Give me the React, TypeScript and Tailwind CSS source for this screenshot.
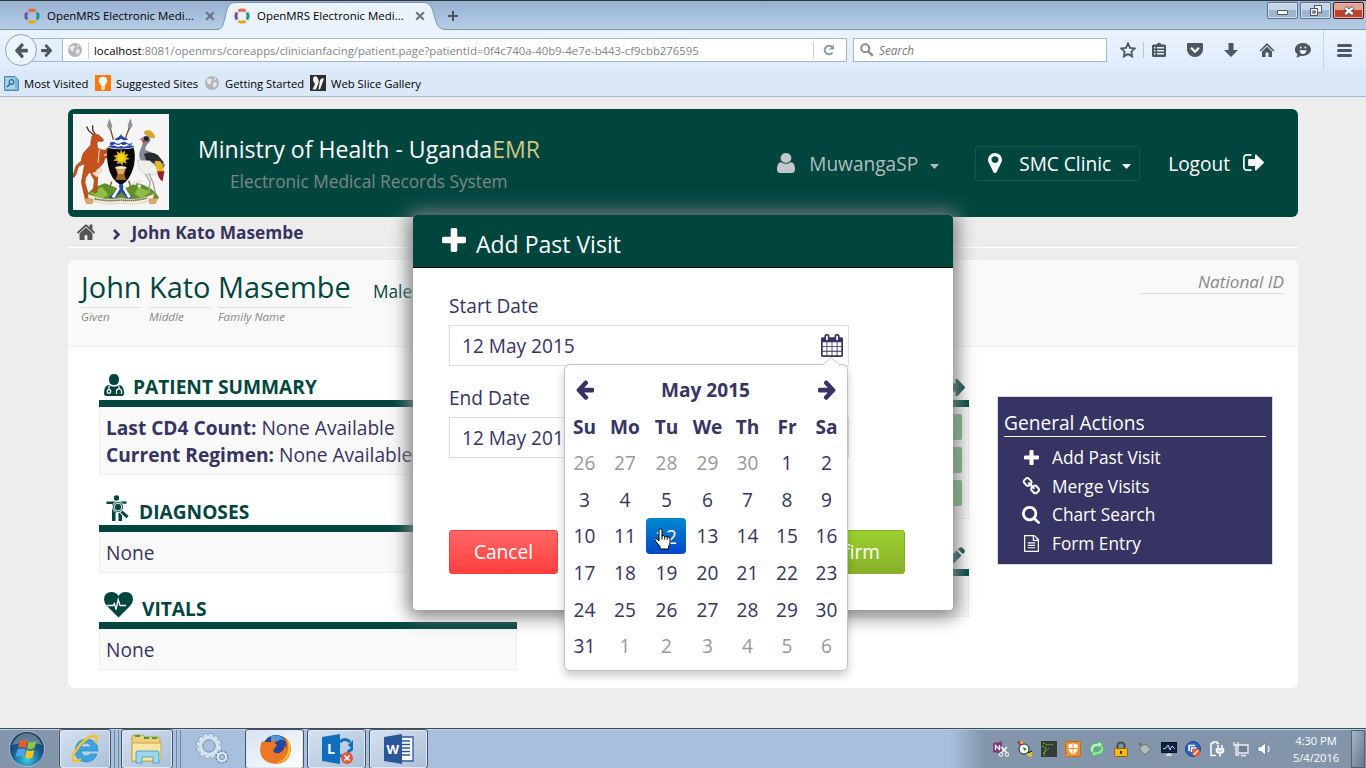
import type { ReactNode } from "react";

const D = {
  plus: "M1600 736v192q0 40-28 68t-68 28h-416v416q0 40-28 68t-68 28h-192q-40 0-68-28t-28-68v-416h-416q-40 0-68-28t-28-68v-192q0-40 28-68t68-28h416v-416q0-40 28-68t68-28h192q40 0 68 28t28 68v416h416q40 0 68 28t28 68z",
  user: "M1280 1399q0 109-62.5 187t-150.5 78h-854q-88 0-150.5-78t-62.5-187q0-85 8.5-160.5t31.5-152 58.5-131 94-89 134.5-34.5q131 128 313 128t313-128q76 0 134.5 34.5t94 89 58.5 131 31.5 152 8.5 160.5zm-256-887q0 159-112.5 271.5t-271.5 112.5-271.5-112.5-112.5-271.5 112.5-271.5 271.5-112.5 271.5 112.5 112.5 271.5z",
  marker: "M1152 640q0-106-75-181t-181-75-181 75-75 181 75 181 181 75 181-75 75-181zm256 0q0 109-33 179l-364 774q-16 33-47.5 52t-67.5 19-67.5-19-46.5-52l-365-774q-33-70-33-179 0-212 150-362t362-150 362 150 150 362z",
  signout: "M704 1440q0 4 1 20t.5 26.5-3 23.5-10 19.5-20.5 6.5h-320q-119 0-203.5-84.5t-84.5-203.5v-704q0-119 84.5-203.5t203.5-84.5h320q13 0 22.5 9.5t9.5 22.5q0 4 1 20t.5 26.5-3 23.5-10 19.5-20.5 6.5h-320q-66 0-113 47t-47 113v704q0 66 47 113t113 47h312l11.5 1 11.5 3 8 5.5 7 9 2 13.5zm928-544q0 26-19 45l-544 544q-19 19-45 19t-45-19-19-45v-288h-448q-26 0-45-19t-19-45v-384q0-26 19-45t45-19h448v-288q0-26 19-45t45-19 45 19l544 544q19 19 19 45z",
  home: "M1472 992v480q0 26-19 45t-45 19h-384v-384h-256v384h-384q-26 0-45-19t-19-45v-480q0-1 .5-3t.5-3l575-474 575 474q1 2 1 6zm223-69l-62 74q-8 9-21 11h-3q-13 0-21-7l-692-577-692 577q-12 8-24 7-13-2-21-11l-62-74q-8-10-7-23.5t11-21.5l719-599q32-26 76-26t76 26l244 204v-195q0-14 9-23t23-9h192q14 0 23 9t9 23v408l219 182q10 8 11 21.5t-7 23.5z",
  left: "M1664 896v128q0 53-32.5 90.5t-84.5 37.5h-704l293 294q38 36 38 90t-38 90l-75 76q-37 37-90 37-52 0-91-37l-651-652q-37-37-37-90 0-52 37-91l651-650q38-38 91-38 52 0 90 38l75 74q38 38 38 91t-38 91l-293 293h704q52 0 84.5 37.5t32.5 90.5z",
  calendar: "M192 1664h288v-288h-288v288zm352 0h320v-288h-320v288zm-352-352h288v-320h-288v320zm352 0h320v-320h-320v320zm-352-384h288v-288h-288v288zm736 736h320v-288h-320v288zm-384-736h320v-288h-320v288zm768 736h288v-288h-288v288zm-384-352h320v-320h-320v320zm-352-864v-288q0-13-9.5-22.5t-22.5-9.5h-64q-13 0-22.5 9.5t-9.5 22.5v288q0 13 9.5 22.5t22.5 9.5h64q13 0 22.5-9.5t9.5-22.5zm736 864h288v-320h-288v320zm-384-384h320v-288h-320v288zm384 0h288v-288h-288v288zm32-480v-288q0-13-9.5-22.5t-22.5-9.5h-64q-13 0-22.5 9.5t-9.5 22.5v288q0 13 9.5 22.5t22.5 9.5h64q13 0 22.5-9.5t9.5-22.5zm384-64v1280q0 52-38 90t-90 38h-1408q-52 0-90-38t-38-90v-1280q0-52 38-90t90-38h128v-96q0-66 47-113t113-47h64q66 0 113 47t47 113v96h384v-96q0-66 47-113t113-47h64q66 0 113 47t47 113v96h128q52 0 90 38t38 90z",
  search: "M1216 832q0-185-131.5-316.5t-316.5-131.5-316.5 131.5-131.5 316.5 131.5 316.5 316.5 131.5 316.5-131.5 131.5-316.5zm512 832q0 52-38 90t-90 38q-54 0-90-38l-343-342q-179 124-399 124-143 0-273.5-55.5t-225-150-150-225-55.5-273.5 55.5-273.5 150-225 225-150 273.5-55.5 273.5 55.5 225 150 150 225 55.5 273.5q0 220-124 399l343 343q37 37 37 90z",
  link: "M1520 1216q0-40-28-68l-208-208q-28-28-68-28-42 0-72 32 3 3 19 18.5t21.5 21.5 15 19 13 25.5 3.5 27.5q0 40-28 68t-68 28q-15 0-27.5-3.5t-25.5-13-19-15-21.5-21.5-18.5-19q-33 31-33 73 0 40 28 68l206 207q27 27 68 27 40 0 68-26l147-146q28-28 28-67zm-703-705q0-40-28-68l-206-207q-28-28-68-28-39 0-68 27l-147 146q-28 28-28 67 0 40 28 68l208 208q27 27 68 27 42 0 72-31-3-3-19-18.5t-21.5-21.5-15-19-13-25.5-3.5-27.5q0-40 28-68t68-28q15 0 27.5 3.5t25.5 13 19 15 21.5 21.5 18.500 19q33-31 33-73zm895 705q0 120-85 203l-147 146q-83 83-203 83-121 0-204-85l-206-207q-83-83-83-203 0-123 88-209l-88-88q-86 88-208 88-120 0-204-84l-208-208q-84-84-84-204t85-203l147-146q83-83 203-83 121 0 204 85l206 207q83 83 83 203 0 123-88 209l88 88q86-88 208-88 120 0 204 84l208 208q84 84 84 204z",
  file: "M1596 380q28 28 48 76t20 88v1152q0 40-28 68t-68 28h-1344q-40 0-68-28t-28-68v-1600q0-40 28-68t68-28h896q40 0 88 20t76 48zm-444-244v376h376q-10-29-22-41l-313-313q-12-12-41-22zm384 1528v-1024h-416q-40 0-68-28t-28-68v-416h-768v1536h1280zm-1024-864q0-14 9-23t23-9h704q14 0 23 9t9 23v64q0 14-9 23t-23 9h-704q-14 0-23-9t-9-23v-64zm736 224q14 0 23 9t9 23v64q0 14-9 23t-23 9h-704q-14 0-23-9t-9-23v-64q0-14 9-23t23-9h704zm0 256q14 0 23 9t9 23v64q0 14-9 23t-23 9h-704q-14 0-23-9t-9-23v-64q0-14 9-23t23-9h704z",
};

function Glyph({ d, box, className }: { d: string; box: string; className: string }) {
  return (
    <svg viewBox={box} preserveAspectRatio="none" fill="currentColor" className={"shrink-0 " + className}>
      <path d={d} />
    </svg>
  );
}

function MrsRing() {
  return (
    <svg viewBox="0 0 16 16" fill="none" strokeWidth="3" className="h-4 w-4 shrink-0">
      <path d="M4.500 3.200Q8 .8 11.500 3.200" stroke="#ee6a35" />
      <path d="M12.900 4.500Q15.300 8 12.900 11.500" stroke="#159a8c" />
      <path d="M11.500 12.900Q8 15.300 4.500 12.900" stroke="#eea616" />
      <path d="M3.100 11.500Q.7 8 3.100 4.500" stroke="#6657a5" />
    </svg>
  );
}

function CloseX() {
  return (
    <svg viewBox="0 0 10 10" className="h-[10px] w-[10px] shrink-0" stroke="#6c7683" strokeWidth="2.200">
      <path d="M1.200 1.200l7.600 7.600M8.800 1.200L1.200 8.800" />
    </svg>
  );
}

function Globe() {
  return (
    <svg viewBox="0 0 14 14" className="h-[14px] w-[14px] shrink-0">
      <circle cx="7" cy="7" r="7" fill="#b3b5b8" />
      <path d="M2 3.500L5 2.500 7.500 4 5.500 6 6 8 4 8.500 2 6.500zM8 6.500l3-.5 1 2.500-2.500 3.500-1.500-2zM9 1.500l2 1.200-.5 1.500-1.500-.7z" fill="#e8eaec" />
    </svg>
  );
}

function TitleBar() {
  return (
    <div className="relative flex h-[30px] shrink-0 items-start border-t border-[#33363b] bg-linear-to-b from-[#96b1d0] to-[#b8cfe8] shadow-[inset_0_-1px_0_#7b95b2]">
      <svg viewBox="0 0 230 29" className="absolute left-[217px] top-0 h-[29px] w-[230px]">
        <path d="M0 28.500C6 28 6 24 8 17C10 7 11 1.500 19 1.500H206C214 1.500 215 7 218 17C220 24 221 28 229 28.500V30H0z" fill="#eaf2fb" stroke="#7b95b2" />
      </svg>
      <div className="relative flex h-[29px] items-center pl-6">
        <MrsRing />
        <span className="ml-[7px] w-[158px] text-[11.450px]">OpenMRS Electronic Medi...</span>
        <CloseX />
        <span className="w-[19px]" />
        <MrsRing />
        <span className="ml-[7px] w-[158px] text-[11.450px]">OpenMRS Electronic Medi...</span>
        <CloseX />
        <svg viewBox="0 0 10 10" className="ml-[23px] h-[10px] w-[10px]" stroke="#4b535e" strokeWidth="2"><path d="M5 0v10M0 5h10" /></svg>
      </div>
      <div className="ml-auto flex gap-[2px] pr-[2px] pt-px">
        <div className="flex h-[17px] w-[31px] items-center justify-center rounded-[2px] border border-[#61718a] bg-linear-to-b from-[#c5d5e8] from-50% to-[#9cb5d0] to-50% shadow-[inset_0_0_0_1px_#d3e0ee]">
          <div className="mt-1 h-[5px] w-[11px] rounded-[1px] border border-[#535666] bg-white" />
        </div>
        <div className="flex h-[17px] w-[31px] items-center justify-center rounded-[2px] border border-[#61718a] bg-linear-to-b from-[#c5d5e8] from-50% to-[#9cb5d0] to-50% shadow-[inset_0_0_0_1px_#d3e0ee]">
          <svg viewBox="0 0 12 12" className="h-3 w-3" fill="#f2f4f7" stroke="#535666"><rect x="4.500" y=".5" width="7" height="7" /><rect x=".5" y="3.500" width="7" height="7" /><rect x="2.900" y="5.900" width="2.200" height="2.200" fill="#9cb5d0" /></svg>
        </div>
        <div className="flex h-[17px] w-[31px] items-center justify-center rounded-[2px] border border-[#4d1822] bg-linear-to-b from-[#e3a394] from-50% to-[#bd4129] to-50% shadow-[inset_0_0_0_1px_#e9b3a5]">
          <svg viewBox="0 0 12 10" className="h-[10px] w-3"><path d="M2 1.500l8 7M10 1.500l-8 7" stroke="#535666" strokeWidth="4" /><path d="M2.300 1.800l7.400 6.400M9.700 1.800L2.300 8.200" stroke="#fff" strokeWidth="2.200" /></svg>
        </div>
      </div>
    </div>
  );
}

function NavBar() {
  return (
    <div className="flex h-10 shrink-0 items-center bg-linear-to-b from-[#eaf3fc] to-[#deebf9] text-[#4c5764]">
      <div className="relative z-10 ml-[5px] flex h-8 w-8 shrink-0 items-center justify-center rounded-full border border-[#8fa4bd] bg-[#eef4fb]">
        <Glyph d={D.left} box="64 160 1600 1580" className="h-[15px] w-[14px]" />
      </div>
      <div className="-ml-[5px] flex h-[24px] w-[30px] shrink-0 items-center justify-center border-y border-[#a3b7cd] pl-2 pr-2">
        <Glyph d={D.left} box="64 160 1600 1580" className="h-[13px] w-[12px] -scale-x-100" />
      </div>
      <div className="flex h-[24px] w-[785px] shrink-0 items-center border border-[#a3b7cd] bg-white pl-[5px]">
        <Globe />
        <span className="ml-[6px] h-[17px] w-px bg-[#cfd3d8]" />
        <span className="ml-[5px] w-[719px] whitespace-nowrap pt-px text-[11.370px] text-[#80858b]"><span className="text-black">localhost</span>:8081/openmrs/coreapps/clinicianfacing/patient.page?patientId=0f4c740a-40b9-4e7e-b443-cf9cbb276595</span>
        <span className="h-[17px] w-px bg-[#cfd3d8]" />
        <svg viewBox="0 0 12 12" className="ml-[9px] h-3 w-3" fill="none" stroke="#8a99ab" strokeWidth="2"><path d="M9.500 8.500A4.300 4.300 0 1 1 9.300 3.300" /><path d="M11 .5V5.500H6z" fill="#8a99ab" stroke="none" /></svg>
      </div>
      <div className="ml-[6px] flex h-[24px] w-[254px] shrink-0 items-center border border-[#a3b7cd] bg-white pl-[6px]">
        <svg viewBox="0 0 14 14" className="h-[14px] w-[14px]" fill="none" stroke="#8d8f92"><circle cx="5.200" cy="5.200" r="4" strokeWidth="2" /><path d="M8.300 8.300l4.500 4.500" strokeWidth="2.600" /></svg>
        <span className="ml-[5px] pt-px text-[11.700px] italic text-[#77797c]">Search</span>
      </div>
      <svg viewBox="0 0 16 16" className="ml-[13px] h-4 w-4 shrink-0" fill="none" stroke="currentColor" strokeWidth="1.800"><path d="M8 1.500l2 4.300 4.700.6-3.400 3.300.8 4.700L8 12.100l-4.100 2.300.8-4.700L1.300 6.400l4.700-.6z" /></svg>
      <span className="ml-[7px] h-4 w-px shrink-0 bg-[#b9c8d9]" />
      <svg viewBox="0 0 16 16" className="ml-[7px] h-4 w-4 shrink-0" fill="currentColor"><path fillRule="evenodd" d="M1 4q0-1.500 1.500-1.500H5L8 .5l3 2h2.500Q15 2.500 15 4v9.500q0 1.500-1.500 1.500h-11Q1 15 1 13.500zM3 5v1.500h1.500V5zm3 0v1.500h7V5zM3 8v1.500h1.500V8zm3 0v1.500h7V8zm-3 3v1.500h1.500V11zm3 0v1.500h7V11z" /></svg>
      <svg viewBox="0 0 16 16" className="ml-5 h-4 w-4 shrink-0"><path d="M1 1h14q1 0 1 1v5.500a8 7.500 0 0 1-16 0V2q0-1 1-1z" fill="currentColor" /><path d="M4 5.800l4 3.900 4-3.900" fill="none" stroke="#fff" strokeWidth="2.200" /></svg>
      <svg viewBox="0 0 16 16" className="ml-5 h-4 w-4 shrink-0" fill="currentColor"><path d="M5.500 1h5v7H15L8 15 1 8h4.500z" /></svg>
      <svg viewBox="0 0 16 16" className="ml-5 h-4 w-4 shrink-0" fill="currentColor"><path d="M8 1L.5 8.500l1.100 1.100L8 3.300l6.400 6.300 1.100-1.100z" /><path d="M8 4.600L3 9.500V15h3.500v-4.500h3V15H13V9.500z" /></svg>
      <svg viewBox="0 0 16 16" className="ml-5 h-4 w-4 shrink-0"><path d="M8 1a8 6.500 0 1 1-2 12.800Q4 15.500 1 15.500q1.500-1.500 1.400-3.300A8 6.500 0 0 1 8 1z" fill="currentColor" /><path d="M4.500 8.300h7Q11 12 8 12t-3.500-3.700z" fill="#fff" /><circle cx="5.700" cy="5.500" r="1" fill="#fff" /><circle cx="10.300" cy="5.500" r="1" fill="#fff" /></svg>
      <span className="ml-3 h-10 w-px shrink-0 bg-[#c6d5e6]" />
      <div className="ml-[13px] flex w-[15px] shrink-0 flex-col gap-[2px]">
        <span className="h-[3px] rounded bg-current" /><span className="h-[3px] rounded bg-current" /><span className="h-[3px] rounded bg-current" />
      </div>
    </div>
  );
}

function Bookmarks() {
  return (
    <div className="flex h-[27px] shrink-0 items-center border-b border-[#a3b8d0] bg-[#dae8f8] pl-1 text-[11.300px] leading-[26px]">
      <svg viewBox="0 0 15 15" className="h-[15px] w-[15px]"><path d="M.5.500H11L14.500 4V14.500H.5z" fill="#7db7d8" stroke="#4b8cb5" /><rect x="1.500" y="2" width="9.500" height="11" fill="#a9d3ea" /><circle cx="7.500" cy="6" r="2.300" fill="none" stroke="#2f6b94" strokeWidth="1.300" /><path d="M5.800 8L3 11" stroke="#2f6b94" strokeWidth="1.500" /></svg>
      <span className="ml-[5px] w-[71px] pt-[2px]">Most Visited</span>
      <svg viewBox="0 0 16 16" className="h-4 w-4"><rect width="16" height="16" fill="#fb7b0a" /><path d="M8 1.800a4 4 0 0 1 2.300 7.400Q10 10 10 11.500H6Q6 10 5.700 9.200A4 4 0 0 1 8 1.800zM6.200 12.300h3.600v1.500l-1 1H7.200l-1-1z" fill="#fff" /></svg>
      <span className="ml-[5px] w-[89px] pt-[2px]">Suggested Sites</span>
      <Globe />
      <span className="ml-[6px] w-[85px] pt-[2px] text-[11.200px]">Getting Started</span>
      <svg viewBox="0 0 16 16" className="h-4 w-4"><rect width="16" height="16" fill="#2b2c2e" /><path d="M4 1.500q2.500-1 4 2Q9.500 7 8 9.500L6 14.500H2.500L5 9Q1.500 5 4 1.500zM9.500 8q0-4 2.500-4.500Q14 2 13.500 5L10 14.500H8.500z" fill="#f3f3f3" /></svg>
      <span className="ml-[5px] pt-[2px]">Web Slice Gallery</span>
    </div>
  );
}

function CoatOfArms() {
  return (
    <svg viewBox="9 12 288 288" className="h-24 w-24 bg-[#f5f5f5]">
      <path d="M118 45l22 80M181 45l-30 80M125 215l-12 38M176 212l14 40" stroke="#8b4a25" strokeWidth="4" />
      <path d="M118 28l8 20-5 14-9-14zM181 28l6 18-9 14-4-14z" fill="#8e969b" stroke="#50575b" />
      <path d="M44 264q14-30 61-44l50 20 45-22q50 12 68 46l-46 12H80z" fill="#5f9128" />
      <path d="M62 250l33-20 20 24-25 16zM205 230l36 16-26 18-22-12z" fill="#8fbe46" />
      <path d="M72 76l-16-14-6-12M76 74l-8-14 0-14" stroke="#4a3022" strokeWidth="4" fill="none" />
      <path d="M66 78l7-5 12 1 14 12 1 7-6 2-10-2-3 8 2 14q14 6 22 6l13-12 6-2 2 5-12 16-14 6q8 16-2 28-10 12-20 18l5 24-2 42-9 4-3-9 4-30-14-26-12 18-2 14 12 44-7 6-6-6-10-44 6-34 4-22-18 8-8 24-6 10-4-4 10-32 16-14q2-24 14-32l14-16 2-18z" fill="#c5511b" stroke="#8a3410" strokeWidth="1.500" />
      <path d="M68 190q16-2 26-18l2 10-16 18zM88 118l-4 40" stroke="#f0dcc5" fill="#f0dcc5" strokeWidth="3" />
      <path d="M96 142l16-8 14 14-3 6-13-10-14 6z" fill="#c5511b" stroke="#8a3410" />
      <path d="M228 76q-8-10-6-10 14-10 24 0 10 10 8 18-12 2-26-8z" fill="#dba62e" stroke="#b58512" />
      <path d="M216 83q8-8 18-4 10 6 6 16-14 10-14 24 16 6 26 14l34 32-12 20-34-10-24-18q-14-18-5-38l10-26-13-4z" fill="#808994" />
      <path d="M222 80q11-4 16 6l-6 9-10-4z" fill="#202328" /><path d="M216 90h9v8h-8z" fill="#cf3a34" />
      <path d="M222 132q26-10 42 4l18 22q-30 6-54-8z" fill="#272a2e" />
      <path d="M201 150l39 2 26 26-8 16q-32 4-47-12z" fill="#f0eee9" stroke="#9b9b9b" />
      <path d="M254 152l18 2 12 34q-16 6-24-8z" fill="#e5b525" /><path d="M262 184l21 0-5 30q-15-8-16-30z" fill="#8e2424" />
      <path d="M226 192l14 22-4 34M236 190l14 30 6 30" stroke="#a8a49c" strokeWidth="4" fill="none" />
      <path d="M114 110q39-18 76 0 8 24 2 56-10 44-39 60-31-16-39-60-6-32 0-56z" fill="#090909" />
      <path d="M114 114l4-20q18-4 35-22 17 18 34 22l4 20q-38 8-77 0z" fill="#fff" />
      <path d="M133 88q20-10 20-16 2 8 22 16-10 6-22-2-10 8-20 2zM120 98q8-6 16 0t17 0 17 0 17 0v5q-9 4-17-1-8 6-17 0-9 6-17 0-8 4-16 2zM116 108q10-4 20 0 8 4 17 0 9 4 17 0 9-4 21 0v4q-38 8-75 0z" fill="#2846a8" />
      <path d="M153 118l4 10 9-6-2 11 12 0-7 8 10 6-12 3 3 11-10-4-4 11-5-10-10 5 2-10-13-1 9-8-9-7 12-2-2-11 10 6z" fill="#d9b30e" /><circle cx="153" cy="143" r="11" fill="#ffd616" />
      <path d="M136 172h33l-6 20 5 18h-31l5-18z" fill="#a36627" /><path d="M140 178h25l-5 14H145z" fill="#dfae69" /><ellipse cx="152.500" cy="173" rx="17" ry="5" fill="#efe4cd" />
      <path d="M149 222h9l5 16 24 24-12 6-21-22-22 22-15-6 26-24z" fill="#2846a8" /><path d="M147 228l-22 32 8 5 16-28zM161 228l22 32-8 5-16-28z" fill="#fff" />
      <path d="M54 252q48 22 98 12 52 10 100-13l-2 16q-45 22-98 12-50 10-97-12z" fill="#f6f0dc" stroke="#b39c6d" />
      <path d="M74 266q34 9 78 4 40 5 80-6" stroke="#5d5546" strokeWidth="5" strokeDasharray="4 2" fill="none" />
      <path d="M42 264l27 3-2 14H50zM264 264l-27 3 2 14h17z" fill="#dba866" stroke="#9b6d37" />
      <g fill="#fafafa" stroke="#aaa"><circle cx="195" cy="220" r="5" /><circle cx="207" cy="216" r="5" /><circle cx="208" cy="228" r="5" /></g>
    </svg>
  );
}

function Caret({ className }: { className: string }) {
  return <svg viewBox="0 0 9 5" className={"h-[5px] w-[9px] " + className} fill="currentColor"><path d="M0 0h9L4.500 5z" /></svg>;
}

function Header() {
  return (
    <div className="flex h-[108px] shrink-0 rounded-md bg-[#00463f] pl-[5px] text-[19.100px] text-white">
      <div className="pt-[5px]"><CoatOfArms /></div>
      <div className="ml-[29px] flex-1 pt-[25px]">
        <div className="h-[33px] text-[23.080px] leading-[30px]">Ministry of Health - Uganda<span className="text-[#cfc77f]">EMR</span></div>
        <div className="pl-8 text-[17.280px] leading-[30px] text-[#7c8784]">Electronic Medical Records System</div>
      </div>
      <div className="flex h-[108px] items-center">
        <Glyph d={D.user} box="0 128 1280 1536" className="h-5 w-[18px] text-[#c3c8c7]" />
        <span className="ml-[14px] pt-[2px] text-[#aebfbc]">MuwangaSP</span>
        <Caret className="ml-[12px] mt-[6px] text-[#aebfbc]" />
        <div className="ml-9 flex h-[35px] w-[165px] items-center rounded-[3px] border border-[#055f53] pl-3">
          <Glyph d={D.marker} box="384 128 1024 1536" className="h-5 w-[14px]" />
          <span className="ml-[17px] pt-[2px]">SMC Clinic</span>
          <Caret className="ml-[11px] mt-[6px]" />
        </div>
        <span className="ml-[28px] pt-[2px]">Logout</span>
        <Glyph d={D.signout} box="64 256 1568 1280" className="-mt-[2px] ml-[13px] mr-[34px] h-[17px] w-[21px]" />
      </div>
    </div>
  );
}

function PatientName({ name, label, className }: { name: string; label: string; className: string }) {
  return (
    <div className={className}>
      <div className="h-[35px] whitespace-nowrap border-b border-[#dcdcdc] text-[28.900px] leading-[28px] text-[#00463f]">{name}</div>
      <div className="text-[11.600px] italic leading-[18px] text-[#888]">{label}</div>
    </div>
  );
}

function Section({ icon, title, className, children }: { icon: ReactNode; title: string; className: string; children: ReactNode }) {
  return (
    <div className={className}>
      <div className="flex h-[26px] items-center font-bold text-[#00463f]">{icon}<span className="pt-px">{title}</span></div>
      <div className="h-[7px] bg-[#00463f]" />
      <div className="border border-t-0 border-[#eee] bg-[#f9f9f9] px-[6px] pb-[5px] pt-[8px] leading-[27px]">{children}</div>
    </div>
  );
}

function Doctor() {
  return (
    <svg viewBox="0 0 20 22" className="-mt-1 ml-[5px] mr-[9px] h-[22px] w-5"><path d="M10 0q5 0 5 5.500T10 11 5 5.500 10 0zM4 11q6 3.500 12 0 4 1.500 4 8 0 3-2 3H2q-2 0-2-3 0-6.500 4-8z" fill="#00463f" /><path d="M5 12v4M15 12v3" stroke="#fff" strokeWidth="1.200" /><circle cx="5" cy="17.500" r="1.800" fill="none" stroke="#fff" strokeWidth="1.300" /><path d="M12.500 20v-3q0-2.200 2.500-2.200t2.500 2.200v3" fill="none" stroke="#fff" strokeWidth="1.300" /></svg>
  );
}

function Diagnosis() {
  return (
    <svg viewBox="0 0 23 26" className="-mt-2 ml-[7px] mr-[10px] h-[26px] w-[23px]" fill="#00463f"><circle cx="10.500" cy="3" r="2.700" /><path d="M1 6.500h19.500v2.200H16V26h-3.500v-8h-3v8H6V9H1Q-.5 8 1 6.500z" /><circle cx="12" cy="12" r="5.500" stroke="#fff" /><circle cx="12" cy="12" r="3.800" stroke="#fff" strokeWidth=".9" /><path d="M15 16l6 6.500" stroke="#fff" strokeWidth="4.500" /><path d="M15.500 16.500l6 5.700" stroke="#00463f" strokeWidth="3" /></svg>
  );
}

function Heart() {
  return (
    <svg viewBox="0 0 29 26" className="-mt-2 ml-[5px] mr-[9px] h-[26px] w-[29px]"><path d="M14.500 25.500L3 14Q0 11 0 7.500 0 0 7.500 0 12 0 14.500 4 17 0 21.500 0 29 0 29 7.500q0 3.500-3 6.500z" fill="#00463f" /><path d="M3 13.500h6l1.500-2 1.500 6 2.200-10 1.800 6H22" fill="none" stroke="#fff" strokeWidth="1.300" /></svg>
  );
}

function Actions() {
  const items = [
    { t: "Add Past Visit", i: <Glyph d={D.plus} box="192 128 1408 1408" className="h-[15px] w-[15px]" /> },
    { t: "Merge Visits", i: <Glyph d={D.link} box="16 16 1696 1696" className="h-[18px] w-[18px]" /> },
    { t: "Chart Search", i: <Glyph d={D.search} box="64 128 1664 1664" className="h-[18px] w-[18px]" /> },
    { t: "Form Entry", i: <Glyph d={D.file} box="128 0 1536 1792" className="h-[17px] w-[15px]" /> },
  ];
  return (
    <div className="ml-[28px] mt-[49px] h-[169px] w-[276px] border border-[#d9d9df] bg-[#363463] px-[6px] pt-[12px] text-white">
      <div className="h-[28px] border-b border-white leading-[28px]">General Actions</div>
      <div className="mt-[7px] text-[17.280px] leading-[28.700px]">
        {items.map((a) => (
          <div key={a.t} className="flex h-[28.700px] items-center pl-[18px]">
            <span className="flex w-[18px] justify-center pb-[2px]">{a.i}</span>
            <span className="ml-3">{a.t}</span>
          </div>
        ))}
      </div>
    </div>
  );
}

function DateField({ label, icon }: { label: string; icon?: boolean }) {
  return (
    <div className="h-[92px]">
      <div className="h-[31px] leading-[25px]">{label}</div>
      <div className="flex h-[41px] w-[400px] items-center justify-between border border-[#ddd] pl-3 pr-[5px]">
        <span className="pt-[2px]">12 May 2015</span>
        {icon && <Glyph d={D.calendar} box="64 0 1664 1792" className="-mt-px h-[23px] w-[22px]" />}
      </div>
    </div>
  );
}

const weeks = ["26 27 28 29 30 1 2", "3 4 5 6 7 8 9", "10 11 12 13 14 15 16", "17 18 19 20 21 22 23", "24 25 26 27 28 29 30", "31 1 2 3 4 5 6"];

function Calendar() {
  return (
    <div className="absolute left-[564px] top-[364px] h-[307px] w-[284px] rounded-md border border-[#c4c4c4] bg-white pt-[6px] text-[19.100px] text-[#363463] shadow-[0_5px_10px_rgba(0,0,0,0.2)]">
      <svg viewBox="0 0 16 9" className="absolute left-[258px] top-[-8px] h-[9px] w-4"><path d="M0 8L8 .5 16 8V9H0z" fill="#fff" /><path d="M0 7.500L8 .5 16 7.500" fill="none" stroke="#ccc" /></svg>
      <div className="flex h-[37px] items-center justify-between pl-[10px] pr-[10px] font-bold">
        <Glyph d={D.left} box="64 160 1600 1580" className="h-5 w-[19px]" />
        <span className="-ml-px pt-[2px]">May 2015</span>
        <Glyph d={D.left} box="64 160 1600 1580" className="h-5 w-[19px] -scale-x-100" />
      </div>
      <div className="grid auto-rows-[36.600px] grid-cols-[39px_42px_41px_41px_39px_40px_39px] items-center text-center">
        {["Su", "Mo", "Tu", "We", "Th", "Fr", "Sa"].map((d) => <span key={d} className="pt-[1.500px] font-bold">{d}</span>)}
        {weeks.flatMap((w, r) => w.split(" ").map((d, c) => {
          const outside = (r === 0 && c < 5) || (r === 5 && c > 0);
          if (r === 2 && c === 2) {
            return <span key={r + "-" + c} className="flex h-9 w-10 items-center justify-center rounded bg-linear-to-b from-[#0088cc] to-[#0044cc] pt-[1.500px] text-white">{d}</span>;
          }
          return <span key={r + "-" + c} className={outside ? "pt-[1.300px] text-[#999]" : "pt-[1.300px]"}>{d}</span>;
        }))}
      </div>
      <svg viewBox="0 0 17 22" className="absolute left-[89px] top-[163px] h-[22px] w-[17px]"><path d="M6.500 1q1.500 0 1.500 1.500V8q1.500-1 2.500.5 1.500-1 2.500.6 2.500-.8 3 1.400v4q0 2-1.500 4V21H6v-2.500L1.500 13Q0 11 1.500 10.500q1.500 0 3.500 2.500V2.500Q5 1 6.500 1z" fill="#fff" stroke="#000" /><path d="M8 7.500v4M10.700 8.500v3M13.200 9.300v2.500" stroke="#000" fill="none" /></svg>
    </div>
  );
}

function Modal() {
  return (
    <div className="absolute left-[413px] top-[215px] flex h-[395px] w-[540px] flex-col rounded bg-white text-[19.100px] text-[#363463] shadow-[0_2px_18px_5px_#808080]">
      <div className="flex h-[53px] shrink-0 items-center rounded-t border-b border-black bg-[#00463f] pl-[29px] text-[23px] text-white">
        <Glyph d={D.plus} box="192 128 1408 1408" className="-mt-[3px] h-6 w-6" />
        <span className="ml-[10px] mt-[6px]">Add Past Visit</span>
      </div>
      <div className="flex flex-col px-9 pt-[26px]">
        <DateField label="Start Date" icon />
        <DateField label="End Date" />
        <div className="mt-[52px] flex w-[456px] justify-between text-white">
          <div className="flex h-11 w-[109px] items-center justify-center rounded-[3px] border border-[#ff3d3d] bg-linear-to-b from-[#ff6666] to-[#ff3d3d]"><span className="pt-px">Cancel</span></div>
          <div className="flex h-11 w-[122px] items-center justify-center rounded-[3px] border border-[#88af28] bg-linear-to-b from-[#9ad22f] to-[#88af28]"><span className="pt-px">Confirm</span></div>
        </div>
      </div>
    </div>
  );
}

function PatientPage() {
  return (
    <div className="flex min-h-0 flex-1 flex-col bg-[#ededed] px-[68px] pt-3 text-[19.150px] text-[#363463]">
      <Header />
      <div className="flex h-[31px] shrink-0 items-center border-b border-white pl-2 text-[17.290px] font-bold">
        <Glyph d={D.home} box="0 220 1792 1316" className="h-4 w-5 text-[#555]" />
        <svg viewBox="0 0 8 11" className="ml-[17px] mt-[5px] h-[11px] w-2" fill="none" stroke="#363463" strokeWidth="2.600"><path d="M1 1l4.500 4.500L1 10" /></svg>
        <span className="ml-[10px] pl-[.5px] pt-[2px]">John Kato Masembe</span>
      </div>
      <div className="mt-3 flex h-[428px] shrink-0 flex-col overflow-hidden rounded-md bg-white">
        <div className="flex h-[87px] border border-b-[#eee] border-x-white border-t-white bg-[#f9f9f9] pl-[12px] pr-[13px] pt-[12px]">
          <PatientName name="John" label="Given" className="w-[60px]" />
          <PatientName name="Kato" label="Middle" className="ml-2 w-[62px]" />
          <PatientName name="Masembe" label="Family Name" className="ml-[7px] w-[133px]" />
          <span className="ml-[22px] mt-[5px] text-[17.280px] leading-[28px] text-[#00463f]">Male</span>
          <div className="ml-auto h-[21px] w-[144px] border-b border-[#dcdcdc] text-right text-[17.200px] italic leading-[18px] text-[#888]">National ID</div>
        </div>
        <div className="flex pl-[31px]">
          <div className="w-[418px] shrink-0">
            <Section className="mt-[27px]" icon={<Doctor />} title="PATIENT SUMMARY">
              <div><b>Last CD4 Count:</b> None Available</div>
              <div><b>Current Regimen:</b> None Available</div>
            </Section>
            <Section className="mt-6" icon={<Diagnosis />} title="DIAGNOSES">None</Section>
            <Section className="mt-[23px]" icon={<Heart />} title="VITALS">None</Section>
          </div>
          <div className="ml-[34px] w-[418px] shrink-0">
            <Section className="mt-[27px]" icon={<Glyph d={D.signout} box="576 340 1060 1110" className="ml-auto mr-1 h-[17px] w-[15px]" />} title="">
              <div className="-mt-px flex flex-col items-end gap-[7px] pb-[7px]">
                {[0, 1, 2].map((i) => (
                  <div key={i} className="h-[26px] w-[90px] rounded-[2px] bg-[#79b879] pr-[7px] text-right text-[12.500px] leading-[27px] text-[#e5e5e5]">E</div>
                ))}
              </div>
            </Section>
            <Section className="mt-6" icon={<svg viewBox="0 0 18 18" className="ml-auto mr-1 h-[18px] w-[18px]" fill="#00463f"><path d="M0 18l1-6L9.500 3.500l5 5L6 17zM11 2.300l1.500-1.500q1.500-1 2.800 0l2 2q1 1.500 0 2.800L15.800 7z" /></svg>} title="">&nbsp;</Section>
          </div>
          <Actions />
        </div>
      </div>
    </div>
  );
}

function TaskButton({ className, children }: { className: string; children: ReactNode }) {
  return <div className={"flex h-10 items-center justify-center rounded-[3px] border border-[#44546a] bg-linear-to-br from-[#d6e2f0] to-[#a9bfd9] shadow-[inset_0_0_0_1px_#dde8f4] " + className}>{children}</div>;
}

function Tray() {
  return (
    <div className="flex items-center gap-2">
      <svg viewBox="0 0 16 16" className="h-4 w-4"><path d="M0 2l9-1.500v12L0 11z" fill="#80397b" /><path d="M2.500 9V4.500l4 4V4" stroke="#fff" strokeWidth="1.300" fill="none" /><path d="M8 6l6 6M14 6l-6 6" stroke="#fff" strokeWidth="1.500" /><circle cx="8" cy="13.500" r="1.800" fill="none" stroke="#fff" /><circle cx="14" cy="13.500" r="1.800" fill="none" stroke="#fff" /></svg>
      <svg viewBox="0 0 16 16" className="h-4 w-4"><path d="M1 0l2 4" stroke="#d2214e" strokeWidth="2" /><path d="M4 3l2-2" stroke="#f3cf00" strokeWidth="2" /><circle cx="7" cy="8" r="5" fill="#fff" stroke="#222" /><path d="M6 6l4 2-3 2z" fill="#268c2c" /><path d="M10 14l5-3M12 15l3-1" stroke="#f3cf00" strokeWidth="2" /><path d="M11 12l4-2" stroke="#000" /></svg>
      <svg viewBox="0 0 16 16" className="h-4 w-4"><rect width="16" height="16" fill="#343a37" /><path d="M2 2l4 2 4-1 3 2M1 5l4 2-2 4 1 4M2 13l6-6" stroke="#6ed321" fill="none" strokeDasharray="2 1" /></svg>
      <svg viewBox="0 0 16 16" className="h-4 w-4"><rect x=".5" y=".5" width="15" height="15" rx="1" fill="#ed922b" stroke="#c96b12" /><path d="M3.500 3.500L8 2.500l4.500 1V8Q12 12 8 13.500 4 12 3.500 8z" fill="#fff" /><path d="M8 3v10M4 7.500h8" stroke="#ed922b" /></svg>
      <svg viewBox="0 0 16 16" className="h-4 w-4"><path d="M2.500 12Q-1 6 5 2.500L9.500 2V0L14 4 9.500 7.500V5.500L6 6Q3.500 8 5 10.500z" fill="#b4f3bd" stroke="#45b45a" strokeWidth=".8" /><path d="M13.500 4Q17 10 11 13.500L6.500 14v2L2 12.500 6.500 9v2L10 10Q12.500 8 11 5.500z" fill="#8fe59c" stroke="#45b45a" strokeWidth=".8" /></svg>
      <svg viewBox="0 0 16 16" className="h-4 w-4"><path d="M4.500 8V5q0-3.500 3.500-3.500T11.500 5v3" fill="none" stroke="#4e4e4e" strokeWidth="2" /><rect x="1.500" y="7.500" width="13" height="8" rx="1" fill="#f2bb19" stroke="#90680a" /><path d="M8 10v3" stroke="#4e3d0b" strokeWidth="2" /></svg>
      <svg viewBox="0 0 16 16" className="h-4 w-4"><path d="M3 6l5-3 6 5-6 6-5-5z" fill="#b5b9bc" stroke="#6c7175" /><path d="M2 2l2 2" stroke="#666" strokeWidth="2" /></svg>
      <svg viewBox="0 0 16 16" className="h-4 w-4"><rect x=".5" y="1.500" width="15" height="10" fill="#11223a" stroke="#0c1420" /><path d="M2 8l3-1 2-3 2 5 2-4 3 3" stroke="#a7d9ff" fill="none" /><path d="M5 14h6M8 12v2" stroke="#dfe6ee" strokeWidth="1.500" /></svg>
      <svg viewBox="0 0 16 16" className="h-4 w-4"><circle cx="8" cy="8" r="7.500" fill="#2c64c4" stroke="#174187" /><path d="M4 10V4.500h6M6.500 11V7h5" stroke="#fff" strokeWidth="1.500" fill="none" /><circle cx="11" cy="11.500" r="4" fill="#e65b32" /><path d="M9 13.500l4-4" stroke="#fff" strokeWidth="1.500" /></svg>
      <svg viewBox="0 0 16 16" className="h-4 w-4" fill="none" stroke="#fff" strokeWidth="1.500"><path d="M7 14.500H2v-12h2V1h4v1.500h2" /><path d="M9 4v4M13 4v4M7.500 8h7v2q0 2-3.500 2t-3.500-2zM11 12v3.500" fill="#cfd5dc" /></svg>
      <svg viewBox="0 0 16 16" className="h-4 w-4" fill="none" stroke="#eef1f5" strokeWidth="1.300"><path d="M5 4h10v8H5z" fill="#6e7f94" /><path d="M8 14.500h5M1 1v3h4V1M3 4v10h3" /></svg>
      <svg viewBox="0 0 16 16" className="h-4 w-4"><path d="M1 5.500h3L8.500 1.500v13L4 10.500H1z" fill="#f6f8fa" stroke="#5a6879" strokeWidth=".7" /><path d="M11 5q2 3 0 6" fill="none" stroke="#eef1f5" strokeWidth="1.300" /></svg>
    </div>
  );
}

function Taskbar() {
  return (
    <div className="flex h-10 shrink-0 items-center border-t border-[#404b58] bg-[linear-gradient(90deg,#8395ab_0,#8395ab_58px,#a7c0dd_60px,#a7c0dd_950px,#8395ab_985px)] shadow-[inset_0_1px_0_#bfd0e2]">
      <svg viewBox="0 0 38 38" className="ml-2 h-[38px] w-[38px]">
        <defs><radialGradient id="orb" cx=".5" cy=".8" r=".8"><stop offset="0" stopColor="#3ecbe8" /><stop offset=".5" stopColor="#1b5f93" /><stop offset="1" stopColor="#17324f" /></radialGradient></defs>
        <circle cx="19" cy="19" r="17.500" fill="url(#orb)" stroke="#a7bccf" />
        <path d="M4 15Q9 3 19 3t15 12q-14-5-30 0z" fill="#fff" opacity=".3" />
        <path d="M12 11q3-2 7.500 0L18 18q-4-2-8 0z" fill="#ee5a24" /><path d="M20.500 11.500q4 2 8-.5L26.500 18q-4 2-7.500.5z" fill="#8dc63f" /><path d="M9.500 19.500q4-2 8 0L16 27q-4-2-8.500 0z" fill="#4ba7e3" /><path d="M18.800 20q3.500 2 7.500 0L24.500 27.500q-4 2-7.500-.3z" fill="#fcc419" />
      </svg>
      <TaskButton className="ml-[13px] w-[52px]">
        <svg viewBox="0 0 32 32" className="h-8 w-8"><path d="M29 18H12q1 5 5 5 3 0 4-2h7q-3 8-11 8Q6 28 6 18 7 6 18 6q11 1 11 12zM12 14h10q-1-4-5-4t-5 4z" fill="#3aa4e0" stroke="#1d7cb9" strokeWidth=".6" /><path d="M26 10q4-6 0-7-6-1-15 9-9 11-7 15 2 3 8-1" fill="none" stroke="#f5c22b" strokeWidth="2.600" /></svg>
      </TaskButton>
      <div className="h-[38px] w-1 border-r border-[#7187a3]" /><div className="mr-[2px] h-[38px] w-1 border-r border-[#7187a3]" />
      <TaskButton className="w-[52px]">
        <svg viewBox="0 0 32 32" className="h-8 w-8"><path d="M1 4q0-2 2-2h9l2 2h13q2 0 2 2v22H1z" fill="#eed079" stroke="#bf9c45" /><path d="M1 10h29v16q0 2-2 2H1z" fill="#f8e5a1" stroke="#c8a651" /><path d="M4 3h5M13 5h5M21 5h5" stroke="#46994b" strokeWidth="2" /><path d="M5 30V20q0-2 2-2h19q2 0 2 2v10h-6v-6H11v6z" fill="#9bd5ee" stroke="#569fc4" /></svg>
      </TaskButton>
      <div className="h-[38px] w-1 border-r border-[#7187a3]" /><div className="h-[38px] w-1 border-r border-[#7187a3]" />
      <svg viewBox="0 0 34 32" className="ml-[15px] mr-[15px] h-8 w-[34px]" fill="none"><circle cx="13" cy="13" r="11.500" stroke="#7f9ab5" strokeWidth="3" strokeDasharray="4 2.020" /><circle cx="13" cy="13" r="11" stroke="#dbe8f3" strokeWidth="2.400" strokeDasharray="3.600 2.160" /><circle cx="13" cy="13" r="8.200" stroke="#d5e3f0" strokeWidth="4" /><circle cx="13" cy="13" r="6.200" stroke="#6f8fae" /><circle cx="26" cy="24" r="5.300" stroke="#6c87a3" strokeDasharray="2 1.330" strokeWidth="2.500" /><circle cx="26" cy="24" r="4" stroke="#dbe8f3" strokeWidth="2.600" /><circle cx="26" cy="24" r="2.700" stroke="#6c87a3" strokeWidth=".7" /></svg>
      <TaskButton className="w-[59px] to-white">
        <svg viewBox="0 0 32 32" className="h-8 w-8"><circle cx="17" cy="15.500" r="13.500" fill="#23489a" /><path d="M12 3q10-2 14 5-5-3-7 0-4 2-7 0z" fill="#4c9bdc" /><path d="M3 8q1 1 3 1l6 0q2-4 4-2-1 3 1 4 2 2-1 3l-2 4q3 4 8 1 4-2 3-7 2 2 2 4 2-6-3-13 8 5 8 13-1 14-15 15Q2 30 1 17q0-5 2-9z" fill="#ee7724" /><path d="M28 6q4 5 3.500 11Q30 29 17 30q10-3 12-12 1-6-1-12z" fill="#f9bd2d" /></svg>
      </TaskButton>
      <TaskButton className="ml-[3px] w-[59px]">
        <svg viewBox="0 0 32 32" className="h-8 w-8"><path d="M19 9q5-5 10 0M28 13l3-3v6l-3 2M19 12a6 6 0 1 0 9 5" fill="none" stroke="#106ebe" strokeWidth="3" /><path d="M1 4l18-3v30L1 28z" fill="#106ebe" /><text x="6" y="21" fontFamily="Open Sans" fontWeight="700" fontSize="14" fill="#fff">L</text><circle cx="26" cy="25" r="6" fill="#e05b42" /><path d="M23.500 22.500l5 5M28.500 22.500l-5 5" stroke="#fff" strokeWidth="1.600" /></svg>
      </TaskButton>
      <TaskButton className="ml-[3px] w-[59px]">
        <svg viewBox="0 0 32 32" className="h-8 w-8"><path d="M16 4h14v24H16z" fill="#fff" stroke="#2b579a" strokeWidth="1.300" /><path d="M19 8h8M19 11.500h8M19 15h8M19 18.500h8M19 22h8" stroke="#2b579a" strokeWidth="1.500" /><path d="M1 4l18-3v30L1 28z" fill="#2b579a" /><text x="3.500" y="21" fontFamily="Open Sans" fontWeight="700" fontSize="13" fill="#fff">W</text></svg>
      </TaskButton>
      <div className="ml-auto flex items-center">
        <Tray />
        <div className="ml-[15px] w-[56px] text-center text-[11.100px] leading-[17px] text-white"><div>4:30 PM</div><div>5/4/2016</div></div>
        <div className="ml-[7px] mr-px h-[38px] w-[14px] border border-[#536377] bg-linear-to-br from-[#a9b6c5] to-[#66788e]" />
      </div>
    </div>
  );
}

export default function App() {
  return (
    <div className="relative flex h-[768px] w-[1366px] flex-col overflow-hidden whitespace-nowrap font-['Open_Sans',sans-serif] text-black">
      <TitleBar />
      <NavBar />
      <Bookmarks />
      <PatientPage />
      <Taskbar />
      <Modal />
      <Calendar />
    </div>
  );
}
